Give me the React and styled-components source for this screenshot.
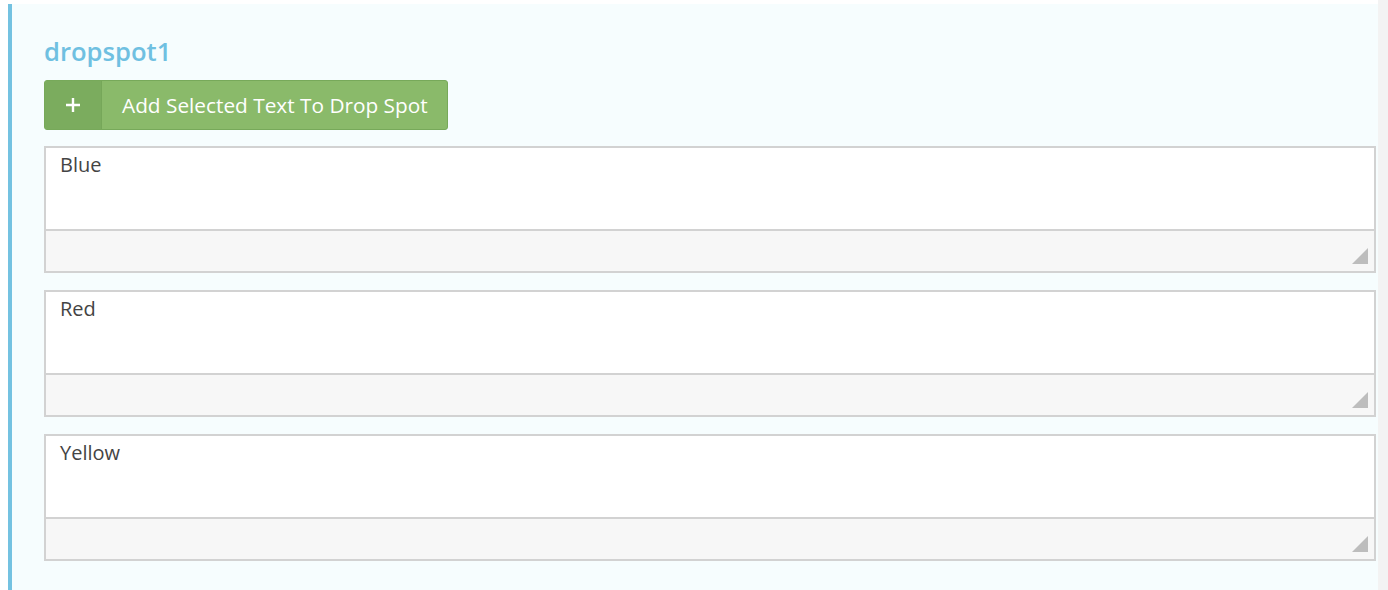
import React from 'react'
import styled, { createGlobalStyle } from 'styled-components'

const GlobalStyle = createGlobalStyle`
	html, body {
		margin: 0;
		padding: 0;
		background: #ffffff;
		height: 590px;
		overflow: hidden;
	}
	body {
		font-family: "Open Sans", "Liberation Sans", sans-serif;
		color: #444;
	}
`;

const Page = styled.div`
	display: flex;
	height: 590px;
	padding: 4px 0 0 8px;
	box-sizing: border-box;
`;

const Panel = styled.section`
	flex: 1;
	background-color: #f6fdfe;
	border-left: 4px solid #74c2e1;
	padding: 34px 2px 0 32px;
	box-sizing: border-box;
`;

const Gutter = styled.div`
	width: 10px;
	margin-top: -4px;
	background-color: #f3f3f3;
`;

const Title = styled.h2`
	margin: 0;
	font-size: 25.6px;
	font-weight: 600;
	line-height: 28px;
	color: #6fc0e1;
`;

const AddButton = styled.button`
	display: flex;
	align-items: stretch;
	height: 50px;
	margin: 14px 0 16px;
	padding: 0;
	border: 1px solid #77a95a;
	border-radius: 3px;
	background-color: #8aba6a;
	color: #fff;
	font-family: inherit;
	font-size: 20.8px;
	cursor: pointer;
	overflow: hidden;
`;

const ButtonIcon = styled.span`
	display: flex;
	align-items: center;
	justify-content: center;
	width: 56px;
	background-color: #7bac5e;
	border-right: 1px solid #76a759;
`;

const ButtonLabel = styled.span`
	display: flex;
	align-items: center;
	padding: 0 19px 0 20px;
`;

const SpotList = styled.div`
	display: flex;
	flex-direction: column;
	gap: 17px;
`;

const Spot = styled.div`
	border: 2px solid #d2d2d2;
	background: #fff;
`;

const SpotText = styled.div`
	height: 81px;
	padding: 3px 14px;
	box-sizing: border-box;
	font-size: 20px;
	line-height: 28px;
	color: #444;
`;

const SpotFooter = styled.div`
	position: relative;
	height: 42px;
	border-top: 2px solid #d2d2d2;
	background-color: #f7f7f7;
	box-sizing: border-box;
`;

const Grip = styled.span`
	position: absolute;
	right: 6px;
	bottom: 7px;
	width: 0;
	height: 0;
	border-style: solid;
	border-width: 0 0 16px 16px;
	border-color: transparent transparent #bdbdbd transparent;
`;

const spots = ['Blue', 'Red', 'Yellow'];

export default function App() {
	return (
		<>
			<GlobalStyle />
			<Page>
				<Panel>
					<Title>dropspot1</Title>
					<AddButton type="button">
						<ButtonIcon>
							<svg width="14" height="14" viewBox="0 0 14 14">
								<path d="M7 0v14M0 7h14" stroke="#fff" strokeWidth="2.4" />
							</svg>
						</ButtonIcon>
						<ButtonLabel>Add Selected Text To Drop Spot</ButtonLabel>
					</AddButton>
					<SpotList>
						{spots.map(s => (
							<Spot key={s}>
								<SpotText>{s}</SpotText>
								<SpotFooter>
									<Grip />
								</SpotFooter>
							</Spot>
						))}
					</SpotList>
				</Panel>
				<Gutter />
			</Page>
		</>
	)
}
